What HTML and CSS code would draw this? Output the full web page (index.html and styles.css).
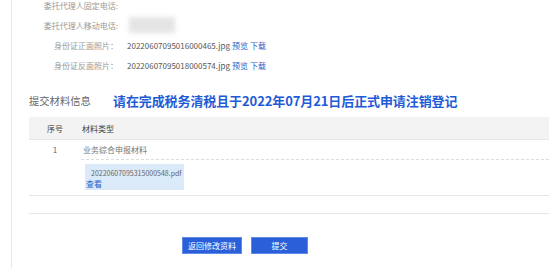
FILE: index.html
```html
<!DOCTYPE html>
<html lang="zh-CN">
<head>
<meta charset="utf-8">
<link rel="stylesheet" href="styles.css">
</head>
<body>
<div class="page">
  <div class="form">
    <div class="row"><span class="label">委托代理人固定电话:</span><span class="value"></span></div>
    <div class="row"><span class="label">委托代理人移动电话:</span><span class="value"><span class="blur"></span></span></div>
    <div class="row"><span class="label">身份证正面照片：</span><span class="value">20220607095016000465.jpg <a class="link">预览</a> <a class="link">下载</a></span></div>
    <div class="row"><span class="label">身份证反面照片：</span><span class="value">20220607095018000574.jpg <a class="link">预览</a> <a class="link">下载</a></span></div>
  </div>

  <div class="section">
    <div class="section-head">
      <span class="section-title">提交材料信息</span>
      <span class="notice">请在完成税务清税且于2022年07月21日后正式申请注销登记</span>
    </div>
    <div class="table">
      <div class="thead">
        <div class="c-no">序号</div>
        <div class="c-type">材料类型</div>
      </div>
      <div class="trow">
        <div class="c-no">1</div>
        <div class="c-type">
          <div class="type-name">业务综合申报材料</div>
          <div class="files">
            <div class="file">
              <div class="file-name">20220607095315000548.pdf</div>
              <a class="link view">查看</a>
            </div>
          </div>
        </div>
      </div>
      <div class="trow empty"></div>
    </div>
  </div>

  <div class="actions">
    <button class="btn wide">返回修改资料</button>
    <button class="btn">提交</button>
  </div>
</div>
</body>
</html>
```

FILE: styles.css
```css
html, body {
  margin: 0;
  padding: 0;
  background: #fff;
  overflow: hidden;
}
body {
  font-family: "Noto Sans CJK SC", "Noto Sans", sans-serif;
  font-size: 8px;
  color: #555;
}
.page {
  margin-left: 11px;
  border-left: 1px solid #e8e8e8;
  height: 273px;
}
.form {
  margin-top: -5px;
}
.row {
  display: flex;
  align-items: center;
  height: 20px;
}
.label {
  width: 106px;
  text-align: right;
  color: #999;
  flex-shrink: 0;
  white-space: nowrap;
}
.value {
  margin-left: 9px;
  color: #555;
  white-space: nowrap;
  display: flex;
  align-items: center;
  gap: 2px;
}
.blur {
  display: block;
  width: 46px;
  height: 16px;
  margin-left: 2px;
  background: #e4e4e4;
  filter: blur(2.5px);
}
.link {
  color: #2c62c9;
  cursor: pointer;
}
.section {
  margin-top: 15px;
  padding-left: 17px;
  width: 520px;
}
.section-head {
  display: flex;
  align-items: center;
  height: 20px;
}
.section-title {
  font-size: 10.3px;
  color: #666;
  width: 84px;
}
.notice {
  font-size: 13px;
  font-weight: bold;
  color: #1f5bd7;
  white-space: nowrap;
  letter-spacing: -0.1px;
}
.table {
  margin-top: 7px;
}
.thead {
  display: flex;
  align-items: center;
  height: 22px;
  background: #f3f3f3;
  border-bottom: 1px solid #e6e6e6;
  color: #444;
}
.c-no {
  width: 52px;
  text-align: center;
  flex-shrink: 0;
}
.c-type {
  flex: 1;
  padding-left: 1px;
}
.trow {
  display: flex;
  border-bottom: 1px solid #e6e6e6;
  padding-bottom: 5px;
}
.trow .c-no {
  line-height: 19px;
  color: #666;
}
.trow .c-type {
  padding-left: 0;
}
.type-name {
  line-height: 19px;
  padding-left: 2px;
  color: #777;
  border-bottom: 1px dashed #dcdcdc;
}
.files {
  padding: 4px 0 0 4px;
}
.file {
  width: 99px;
  height: 26px;
  background: #dbeaf8;
  box-sizing: border-box;
  padding-top: 3px;
}
.file-name {
  font-size: 7px;
  line-height: 12px;
  padding-left: 6px;
  color: #666;
  white-space: nowrap;
}
.view {
  display: block;
  line-height: 10px;
  padding-left: 1px;
}
.trow.empty {
  height: 17px;
  padding: 0;
}
.actions {
  display: flex;
  gap: 9px;
  margin-top: 23px;
  padding-left: 170px;
}
.btn {
  height: 17px;
  width: 57px;
  border: 1px solid #5f8be8;
  background: #2a5fd9;
  color: #fff;
  font-family: "Noto Sans CJK SC", sans-serif;
  font-size: 8px;
  padding: 0;
  line-height: 15px;
}
.btn.wide {
  width: 60px;
}
```
